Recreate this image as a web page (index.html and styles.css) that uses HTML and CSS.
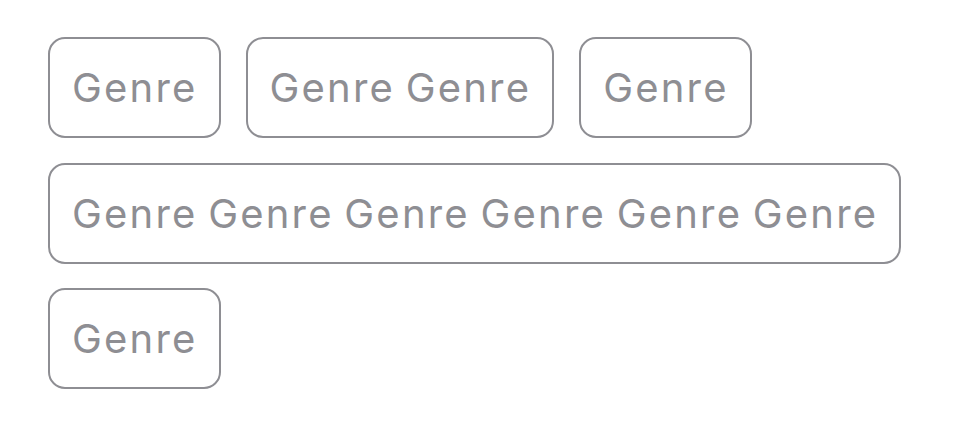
FILE: index.html
```html
<!DOCTYPE html>
<html>
<head>
<meta charset="utf-8">
<link rel="stylesheet" href="styles.css">
</head>
<body>
<div class="chips">
  <span class="chip">Genre</span>
  <span class="chip">Genre Genre</span>
  <span class="chip">Genre</span>
  <span class="chip">Genre Genre Genre Genre Genre Genre</span>
  <span class="chip">Genre</span>
</div>
</body>
</html>
```
FILE: styles.css
```css
html, body {
  margin: 0;
  padding: 0;
  background: #ffffff;
}
.chips {
  display: flex;
  flex-wrap: wrap;
  align-items: flex-start;
  gap: 24.5px 25px;
  padding: 37px 48px;
  width: 960px;
  box-sizing: border-box;
}
.chip {
  box-sizing: border-box;
  height: 101px;
  display: inline-flex;
  align-items: center;
  padding: 0 21px 0 22px;
  border: 2.5px solid #8e8e93;
  border-radius: 17px;
  color: #8e8e93;
  font-family: "Inter", "Liberation Sans", sans-serif;
  font-size: 40px;
  letter-spacing: 2.2px;
  word-spacing: -2.8px;
  white-space: nowrap;
}
```
